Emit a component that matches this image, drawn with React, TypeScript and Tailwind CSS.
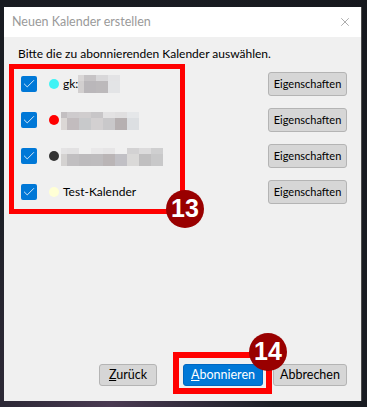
import { X, Check } from "lucide-react";

const font = { fontFamily: 'Lato, "Noto Sans", sans-serif' };

type Cell = { w: number; top: string; bottom: string };

const mosaics: Cell[][] = [
  [
    { w: 6, top: "#d9d6d6", bottom: "#d2cfcf" },
    { w: 12, top: "#c6c3c5", bottom: "#bab7ba" },
    { w: 12, top: "#d8d7d9", bottom: "#bcb9bb" },
    { w: 12, top: "#e3e3e5", bottom: "#e3e4e6" },
  ],
  [
    { w: 6, top: "#c3bfc1", bottom: "#dbd7d5" },
    { w: 12, top: "#cecbcd", bottom: "#c2bcbe" },
    { w: 12, top: "#d0cdce", bottom: "#c8c9cb" },
    { w: 12, top: "#c8c6c8", bottom: "#d3d0d1" },
    { w: 12, top: "#e3e2e3", bottom: "#c9c8ca" },
    { w: 12, top: "#e0dfe0", bottom: "#b6b0b1" },
    { w: 12, top: "#e5e7e9", bottom: "#dcdfe2" },
  ],
  [
    { w: 6, top: "#e4e3e4", bottom: "#d4d2d1" },
    { w: 12, top: "#e2e1e2", bottom: "#c1bfc1" },
    { w: 12, top: "#f0f0f0", bottom: "#bdbbbd" },
    { w: 12, top: "#e9e8e9", bottom: "#bebcbe" },
    { w: 12, top: "#e6e5e6", bottom: "#bab5b6" },
    { w: 12, top: "#f0f0f0", bottom: "#c1c0c5" },
    { w: 12, top: "#d3d2d3", bottom: "#dad9d8" },
    { w: 12, top: "#dcdbdc", bottom: "#c0bfc0" },
    { w: 12, top: "#cfcfd0", bottom: "#c8c8c9" },
  ],
];

function Mosaic({ cells }: { cells: Cell[] }) {
  return (
    <div className="flex">
      {cells.map((c, i) => (
        <div key={i} className="flex flex-col" style={{ width: c.w }}>
          <div className="h-[6px]" style={{ background: c.top }} />
          <div className="h-[12px]" style={{ background: c.bottom }} />
        </div>
      ))}
    </div>
  );
}

function CalendarRow({ color, children }: { color: string; children: React.ReactNode }) {
  return (
    <div className="flex items-center h-[24px]">
      <div className="ml-[3px] w-[16px] h-[16px] rounded-[2px] bg-[#0078d7] flex items-center justify-center">
        <Check size={14} color="white" strokeWidth={1.4} />
      </div>
      <div className="ml-[12px] w-[10px] h-[10px] rounded-full" style={{ background: color }} />
      <div className="ml-[4px] flex items-center text-[12px] text-black">{children}</div>
      <button className="ml-auto w-[79px] h-[24px] rounded-[3px] bg-[#d6d6d6] border border-[#b4b4b4] text-[11px] text-black">
        Eigenschaften
      </button>
    </div>
  );
}

function Badge({ n }: { n: string }) {
  return (
    <div
      className="w-[38px] h-[38px] rounded-full bg-[#990000] flex items-center justify-center text-white text-[25px] font-bold"
      style={{ fontFamily: '"Liberation Sans", Arial, sans-serif' }}
    >
      {n}
    </div>
  );
}

export default function App() {
  return (
    <div
      className="relative w-[367px] h-[407px] overflow-hidden pt-[7px] pl-[4px] bg-[radial-gradient(ellipse_at_30%_100%,#4a3a52_0%,#1c1f26_45%,#16181d_100%)]"
      style={font}
    >
      <div className="w-[358px] h-[394px] flex flex-col bg-[#f0f0f0] border-r border-[#4c4c4c]">
        <div className="h-[30px] bg-white flex items-center justify-between pl-[8px] pr-[9px]">
          <span className="text-[12.5px] text-[#9a9a9a]">Neuen Kalender erstellen</span>
          <X size={14} color="#8a8a8a" strokeWidth={1.2} />
        </div>

        <div className="flex-1 flex flex-col pl-[14px] pr-[14px]">
          <div className="mt-[9px] text-[12px] leading-[16px] text-black">
            Bitte die zu abonnierenden Kalender auswählen.
          </div>

          <div className="mt-[10px] flex flex-col gap-[12px]">
            <CalendarRow color="#3ff3f5">
              <span>gk:</span>
              <Mosaic cells={mosaics[0]} />
            </CalendarRow>
            <CalendarRow color="#ff0000">
              <div className="-ml-[2px] mt-[2px]">
                <Mosaic cells={mosaics[1]} />
              </div>
            </CalendarRow>
            <CalendarRow color="#333333">
              <div className="-ml-[2px] mt-[2px]">
                <Mosaic cells={mosaics[2]} />
              </div>
            </CalendarRow>
            <CalendarRow color="#ffffd5">
              <span>Test-Kalender</span>
            </CalendarRow>
          </div>

          <div className="mt-auto mb-[15px] flex items-center text-[12.5px]">
            <button className="ml-auto w-[58px] h-[22px] rounded-[3px] bg-[#d6d6d6] border border-[#b4b4b4] text-black">
              <span className="underline">Z</span>urück
            </button>
            <button className="ml-[26px] w-[80px] h-[22px] rounded-[3px] bg-[#0078d7] border border-[#0067c0] text-white">
              <span className="underline">A</span>bonnieren
            </button>
            <button className="ml-[10px] w-[74px] h-[22px] rounded-[3px] bg-[#d6d6d6] border border-[#b4b4b4] text-black">
              Abbrechen
            </button>
          </div>
        </div>
      </div>

      {/* annotations */}
      <div className="absolute left-[9px] top-[64px] w-[176px] h-[150px] border-[5px] border-[#ff0000]" />
      <div className="absolute left-[166px] top-[190px]">
        <Badge n="13" />
      </div>
      <div className="absolute left-[173px] top-[352px] w-[99px] h-[42px] border-[6px] border-[#ff0000]" />
      <div className="absolute left-[249px] top-[333px]">
        <Badge n="14" />
      </div>
    </div>
  );
}
